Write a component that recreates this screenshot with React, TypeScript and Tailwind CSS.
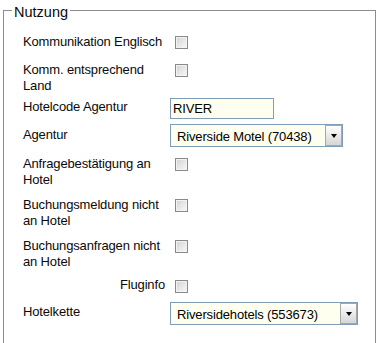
import React from 'react';

const textCls = "font-['Liberation_Sans',Arial,sans-serif] text-[13px] leading-[16px] tracking-[-0.15px] text-[#0a0a0a]";

function CheckBox() {
  return (
    <span className="block w-[13px] h-[13px] border border-[#8a8a8a] bg-gradient-to-br from-[#d2d2d2] to-[#fafafa] shadow-[inset_0_0_0_1px_#f2f2f2]" />
  );
}

function SelectBox({ value, width }: { value: string; width: string }) {
  return (
    <div className={`${width} h-[23px] flex border border-[#7f9db9] bg-[#fffff0]`}>
      <div className={`${textCls} flex-1 pl-[6px] pt-[4px] text-black whitespace-nowrap`}>{value}</div>
      <div className="w-[17px] h-full flex items-center justify-center border border-[#a7a7a7] bg-gradient-to-b from-[#ffffff] to-[#d6d6d6]">
        <span className="w-0 h-0 border-l-[3px] border-r-[3px] border-t-[4px] border-l-transparent border-r-transparent border-t-black" />
      </div>
    </div>
  );
}

export default function App() {
  return (
    <div className="w-[381px] h-[343px] overflow-hidden bg-white">
      <fieldset className="ml-[3px] w-[373px] h-[400px] border border-[#8c8c8c] pl-[8px]">
        <legend className="px-[2px] pt-[4px] font-['Liberation_Sans',Arial,sans-serif] text-[14.5px] leading-[16px] text-[#0a0a0a]">
          Nutzung
        </legend>
        <div className="pt-[14px] pl-[11px] flex flex-col">
          {/* Checkbox- und Auswahlzeilen */}
          <div className="h-[28px] flex items-start">
            <div className={`${textCls} w-[147px] whitespace-nowrap`}>Kommunikation Englisch</div>
            <div className="ml-[5px] mt-[2px]"><CheckBox /></div>
          </div>

          <div className="h-[36px] flex items-start">
            <div className={`${textCls} w-[147px] whitespace-nowrap`}>Komm. entsprechend<br />Land</div>
            <div className="ml-[5px] mt-[2px]"><CheckBox /></div>
          </div>

          <div className="h-[26px] flex items-start">
            <div className={`${textCls} w-[147px] mt-[1px] whitespace-nowrap`}>Hotelcode Agentur</div>
            <div className={`${textCls} w-[104px] h-[21px] border border-[#7f9db9] bg-[#fffff0] pl-[2px] pt-[2px] text-black`}>RIVER</div>
          </div>

          <div className="h-[32px] flex items-start">
            <div className={`${textCls} w-[147px] mt-[3px] whitespace-nowrap`}>Agentur</div>
            <SelectBox value="Riverside Motel (70438)" width="w-[173px]" />
          </div>

          <div className="h-[41px] flex items-start">
            <div className={`${textCls} w-[147px] whitespace-nowrap`}>Anfragebestätigung an<br />Hotel</div>
            <div className="ml-[5px] mt-[2px]"><CheckBox /></div>
          </div>

          <div className="h-[41px] flex items-start">
            <div className={`${textCls} w-[147px] whitespace-nowrap`}>Buchungsmeldung nicht<br />an Hotel</div>
            <div className="ml-[5px] mt-[2px]"><CheckBox /></div>
          </div>

          <div className="h-[39px] flex items-start">
            <div className={`${textCls} w-[147px] whitespace-nowrap`}>Buchungsanfragen nicht<br />an Hotel</div>
            <div className="ml-[5px] mt-[2px]"><CheckBox /></div>
          </div>

          <div className="h-[25px] flex items-start">
            <div className={`${textCls} w-[147px] pr-[5px] text-right whitespace-nowrap`}>Fluginfo</div>
            <div className="ml-[5px] mt-[3px]"><CheckBox /></div>
          </div>

          <div className="h-[32px] flex items-start">
            <div className={`${textCls} w-[147px] mt-[2px] whitespace-nowrap`}>Hotelkette</div>
            <SelectBox value="Riversidehotels (553673)" width="w-[188px]" />
          </div>
        </div>
      </fieldset>
    </div>
  );
}
